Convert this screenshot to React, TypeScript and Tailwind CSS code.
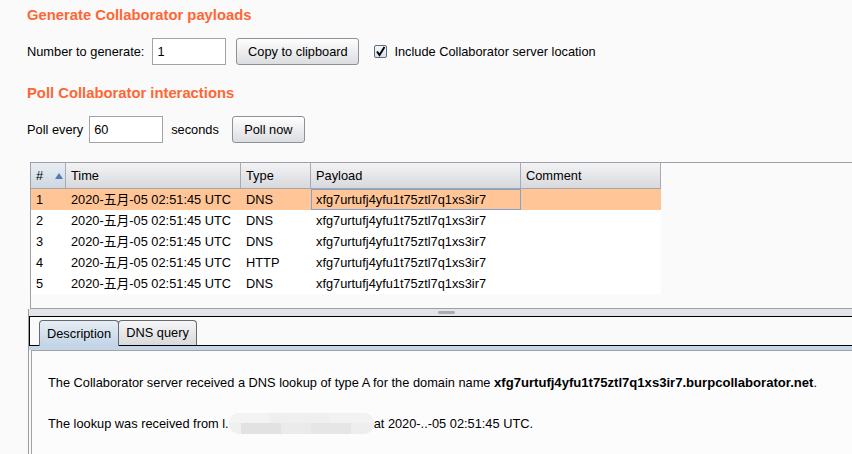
import React from "react";

const rows = [
  { n: "1", type: "DNS", sel: true },
  { n: "2", type: "DNS", sel: false },
  { n: "3", type: "DNS", sel: false },
  { n: "4", type: "HTTP", sel: false },
  { n: "5", type: "DNS", sel: false },
];

const PAYLOAD = "xfg7urtufj4yfu1t75ztl7q1xs3ir7";
const TIME = "2020-五月-05 02:51:45 UTC";

function Header({ w, label, sorted }: { w: string; label: string; sorted?: boolean }) {
  return (
    <div
      className={`${w} h-full flex items-center pl-[5px] border-r border-[#a7aab0] ${
        sorted
          ? "bg-linear-to-b from-[#e9eef3] to-[#cdd7e1]"
          : "bg-linear-to-b from-[#f3f3f5] to-[#d8d9dd]"
      }`}
    >
      <span>{label}</span>
      {sorted && (
        <svg width="8" height="6" viewBox="0 0 8 6" className="ml-[12px]">
          <path d="M4 0 L8 6 L0 6 Z" fill="#4d7fb6" />
        </svg>
      )}
    </div>
  );
}

export default function App() {
  return (
    <div className="w-[852px] h-[454px] overflow-hidden bg-[#fafafa] text-[12.8px] text-black font-['Liberation_Sans','Noto_Sans_CJK_SC',sans-serif]">
      <div className="pl-[27px] pt-[6px]">
        <h1 className="h-[18px] leading-[18px] text-[14.8px] font-bold text-[#ff6633]">
          Generate Collaborator payloads
        </h1>
        <div className="mt-[14px] h-[27px] flex items-center">
          <span className="leading-[16px]">Number to generate:</span>
          <div className="ml-[8px] w-[74px] h-[27px] border border-[#a3a3a3] bg-white flex items-center pl-[4px]">
            1
          </div>
          <button className="ml-[10px] w-[123px] h-[27px] border border-[#8c9097] rounded-[3px] bg-linear-to-b from-[#fefefe] to-[#dcdde0] leading-[16px]">
            Copy to clipboard
          </button>
          <div className="ml-[15px] w-[13px] h-[13px] border border-[#5d6b7a] rounded-[2px] bg-linear-to-b from-[#f5f8fb] to-[#d6dee7] flex items-center justify-center">
            <svg width="11" height="11" viewBox="0 0 11 11">
              <path d="M2 5.5 L4.5 9 L9.5 1" stroke="#000" strokeWidth="1.9" fill="none" />
            </svg>
          </div>
          <span className="ml-[7px] leading-[16px]">Include Collaborator server location</span>
        </div>
        <h2 className="mt-[19px] h-[18px] leading-[18px] text-[14.8px] font-bold text-[#ff6633]">
          Poll Collaborator interactions
        </h2>
        <div className="mt-[14px] h-[27px] flex items-center">
          <span className="leading-[16px]">Poll every</span>
          <div className="ml-[6px] w-[74px] h-[27px] border border-[#a3a3a3] bg-white flex items-center pl-[4px]">
            60
          </div>
          <span className="ml-[8px] leading-[16px]">seconds</span>
          <button className="ml-[13px] w-[73px] h-[27px] border border-[#8c9097] rounded-[3px] bg-linear-to-b from-[#fefefe] to-[#dcdde0] leading-[16px]">
            Poll now
          </button>
        </div>
      </div>

      {/* Table */}
      <div className="mt-[19px] ml-[30px] border-t border-l border-b border-[#9ea2a8]">
        <div className="h-[26px] flex">
          <div className="w-[630px] flex border-b border-[#a3a6ab]">
            <Header w="w-[35px]" label="#" sorted />
            <Header w="w-[175px]" label="Time" />
            <Header w="w-[70px]" label="Type" />
            <Header w="w-[210px]" label="Payload" />
            <Header w="w-[140px]" label="Comment" />
          </div>
        </div>
        <div className="w-[630px] bg-white">
          {rows.map((r) => (
            <div
              key={r.n}
              className={`h-[21px] flex ${r.sel ? "bg-[#ffc597]" : "bg-white"}`}
            >
              <div className="w-[35px] pl-[5px] flex items-center">{r.n}</div>
              <div className="w-[175px] pl-[5px] flex items-center">{TIME}</div>
              <div className="w-[70px] pl-[5px] flex items-center">{r.type}</div>
              <div
                className={`w-[210px] pl-[4px] flex items-center border ${
                  r.sel ? "border-[#7fa3cc]" : "border-transparent"
                }`}
              >
                {PAYLOAD}
              </div>
              <div className="w-[140px]" />
            </div>
          ))}
        </div>
        <div className="h-[14px]" />
      </div>

      {/* Lower panel */}
      <div className="ml-[28px] border-l border-[#9c9c9c]">
        <div className="h-[7px] bg-[#e2e4e8] flex items-center pl-[409px]">
          <div className="w-[17px] h-[3px] rounded-[2px] bg-[#a8acb2]" />
        </div>
        <div className="h-[30px] border-t border-l border-b border-black flex items-end pl-[9px]">
          <div className="w-[80px] h-[26px] -mb-px border border-b-0 border-[#666a70] rounded-t-[4px] bg-linear-to-b from-[#e6edf4] to-[#c2d4e6] flex items-center justify-center leading-[16px]">
            Description
          </div>
          <div className="w-[79px] h-[25px] -ml-px border border-b-0 border-[#666a70] rounded-t-[4px] bg-linear-to-b from-[#f6f6f6] to-[#d8d9db] flex items-center justify-center leading-[16px]">
            DNS query
          </div>
        </div>
        <div className="h-[4px] bg-[#c4d5e7]" />
        <div className="ml-[2px] h-[110px] border-t border-l border-[#a0a3a8] bg-[#fcfcfc] pl-[16px] pt-[24px]">
          <p className="leading-[16px] whitespace-nowrap">
            The Collaborator server received a DNS lookup of type A for the domain name{" "}
            <b className="text-[13.1px]">xfg7urtufj4yfu1t75ztl7q1xs3ir7.burpcollaborator.net</b>.
          </p>
          <p className="mt-[22px] leading-[16px] whitespace-nowrap flex items-center">
            <span>The lookup was received from l.</span>
            <span className="w-[145px] h-[21px] rounded-[10px] bg-[#f0f0f0] overflow-hidden flex flex-col">
              <span className="h-[10px] flex">
                <span className="w-[40px] bg-[#f3f3f3]" />
                <span className="w-[60px] bg-[#efefef]" />
                <span className="w-[45px] bg-[#f2f2f2]" />
              </span>
              <span className="h-[11px] flex">
                <span className="w-[12px] bg-[#f0f0f0]" />
                <span className="w-[40px] bg-[#e2e2e2]" />
                <span className="w-[30px] bg-[#ebebeb]" />
                <span className="w-[40px] bg-[#e6e6e6]" />
                <span className="w-[23px] bg-[#eeeeee]" />
              </span>
            </span>
            <span>at 2020-..-05 02:51:45 UTC.</span>
          </p>
        </div>
      </div>
    </div>
  );
}
